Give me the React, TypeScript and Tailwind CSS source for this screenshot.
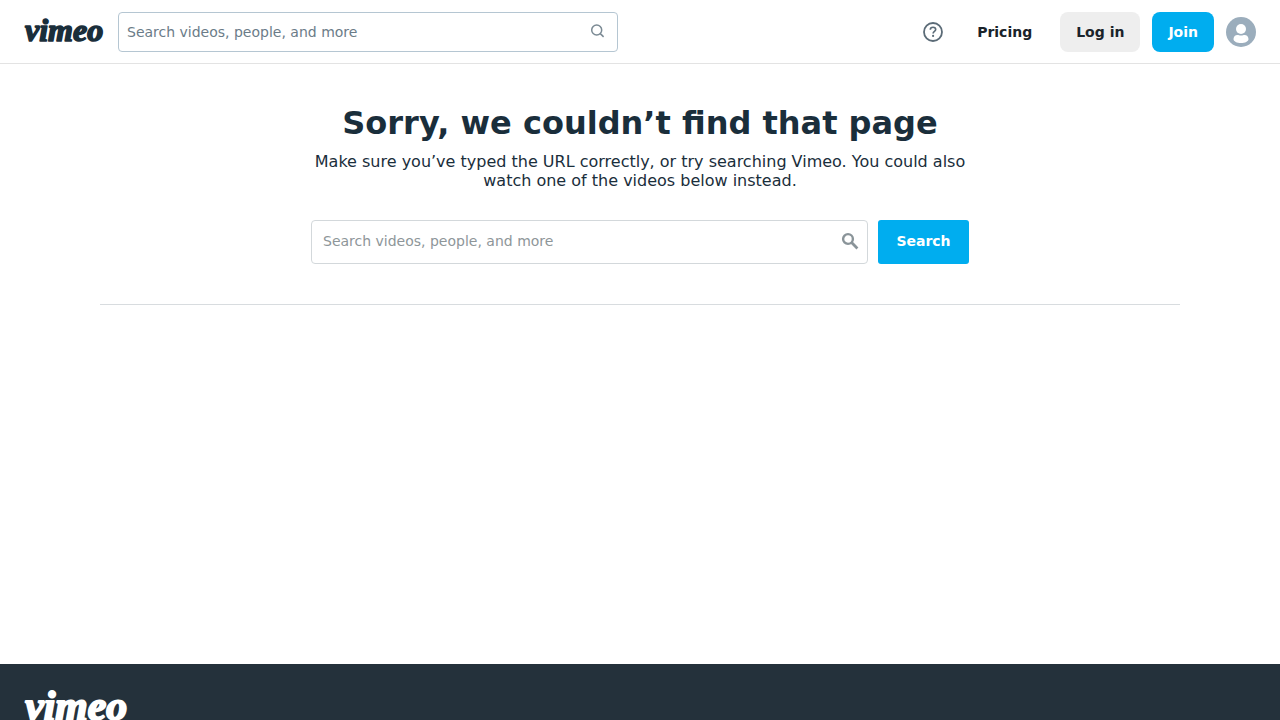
import React, { useState } from "react";

type LogoProps = {
  className: string;
};

function Logo({ className }: LogoProps) {
  return (
    <svg className={className} viewBox="0 0 80 40" role="img" aria-label="Vimeo">
      <text
        x="1"
        y="28"
        fontSize="32"
        fontFamily="'Liberation Serif', serif"
        fontWeight="bold"
        fontStyle="italic"
        fill="currentColor"
        stroke="currentColor"
        strokeWidth="1.6"
        strokeLinejoin="round"
      >
        vimeo
      </text>
    </svg>
  );
}

function HelpIcon() {
  return (
    <svg className="size-5" viewBox="0 0 20 20" fill="none" stroke="currentColor" aria-hidden="true">
      <circle cx="10" cy="10" r="9" strokeWidth="1.8" />
      <path
        d="M7.3 7.8c0-1.5 1.1-2.5 2.7-2.5s2.7 1 2.7 2.3c0 1.8-2.6 1.9-2.6 4"
        strokeWidth="1.6"
      />
      <circle cx="10.1" cy="13.9" r="1.1" fill="currentColor" stroke="none" />
    </svg>
  );
}

function AvatarIcon() {
  return (
    <svg className="size-[30px]" viewBox="0 0 30 30" aria-hidden="true">
      <circle cx="15" cy="15" r="15" fill="#9badbc" />
      <circle cx="15" cy="12" r="5" fill="#fff" />
      <path
        d="M7.5 22c0-2.5 1.8-4.1 3.9-4.1 1.2 0 1.9.7 3.6.7s2.4-.7 3.6-.7c2.1 0 3.9 1.6 3.9 4.1 0 2.5-3.5 4-7.5 4s-7.5-1.5-7.5-4z"
        fill="#fff"
      />
    </svg>
  );
}

export default function App() {
  const [headerQuery, setHeaderQuery] = useState("");
  const [pageQuery, setPageQuery] = useState("");

  return (
    <div className="min-h-screen bg-white font-['DejaVu_Sans',sans-serif] text-[#1a2e3b]">
      <header className="flex h-16 items-center justify-between border-b border-[#e3e3e3] px-6">
        <div className="flex flex-1 items-center gap-3.5">
          <a href="/" className="shrink-0 pt-0.5">
            <Logo className="h-10 w-20" />
          </a>
          <form
            role="search"
            onSubmit={(e) => e.preventDefault()}
            className="flex h-10 w-full max-w-[500px] items-center rounded border border-[#b5c6d2] pr-3 pl-2"
          >
            <input
              type="search"
              aria-label="Search Vimeo"
              placeholder="Search videos, people, and more"
              value={headerQuery}
              onChange={(e) => setHeaderQuery(e.target.value)}
              className="min-w-0 flex-1 text-sm outline-none placeholder:text-[#6b7c88]"
            />
            <button type="submit" aria-label="Search" className="text-[#7b8a94]">
              <svg className="size-4" viewBox="0 0 16 16" fill="none" stroke="currentColor" strokeWidth="1.5" aria-hidden="true">
                <circle cx="7.7" cy="6" r="5" />
                <path d="M11.3 9.6L14.6 12.9" />
              </svg>
            </button>
          </form>
        </div>

        <nav className="flex items-center gap-3 text-sm font-bold text-[#1a232a]">
          <button type="button" aria-label="Help" className="mr-0.5 p-1 text-[#5b6b77]">
            <HelpIcon />
          </button>
          <a href="/upgrade" className="px-4 py-2">
            Pricing
          </a>
          <button type="button" className="h-10 rounded-lg bg-[#eeeeee] px-4">
            Log in
          </button>
          <button type="button" className="h-10 rounded-lg bg-[#00adef] px-4 text-white">
            Join
          </button>
          <button type="button" aria-label="Account">
            <AvatarIcon />
          </button>
        </nav>
      </header>

      <main className="mx-auto min-h-[600px] max-w-[1128px] px-6">
        <section className="border-b border-[#d8dcdf] pt-10 pb-10">
          <div className="mx-auto max-w-[658px]">
            <h1 className="text-center text-[32px] leading-[38px] font-bold">
              Sorry, we couldn’t find that page
            </h1>
            <p className="mt-2.5 text-center text-base leading-[19px]">
              Make sure you’ve typed the URL correctly, or try searching Vimeo. You could also
              watch one of the videos below instead.
            </p>
            <form
              role="search"
              onSubmit={(e) => e.preventDefault()}
              className="mt-[30px] flex gap-2.5"
            >
              <label className="flex h-11 min-w-0 flex-1 items-center rounded border border-[#d3d8db] pr-2 pb-0.5 pl-[11px]">
                <input
                  type="search"
                  aria-label="Search videos"
                  placeholder="Search videos, people, and more"
                  value={pageQuery}
                  onChange={(e) => setPageQuery(e.target.value)}
                  className="min-w-0 flex-1 text-sm outline-none placeholder:text-[#8e9699]"
                />
                <svg className="size-[18px]" viewBox="0 0 18 18" fill="none" stroke="#8a9499" aria-hidden="true">
                  <circle cx="7" cy="7" r="4.9" strokeWidth="2.4" />
                  <path d="M10.6 10.6L16.4 16.4" strokeWidth="2.8" />
                </svg>
              </label>
              <button
                type="submit"
                className="h-11 w-[91px] rounded-[3px] bg-[#00adef] pb-0.5 text-sm font-bold text-white"
              >
                Search
              </button>
            </form>
          </div>
        </section>
      </main>

      <footer className="bg-[#24313b] px-6 pt-5 pb-8 text-white">
        <a href="/" className="inline-block">
          <Logo className="h-[52px] w-[104px]" />
        </a>
      </footer>
    </div>
  );
}
